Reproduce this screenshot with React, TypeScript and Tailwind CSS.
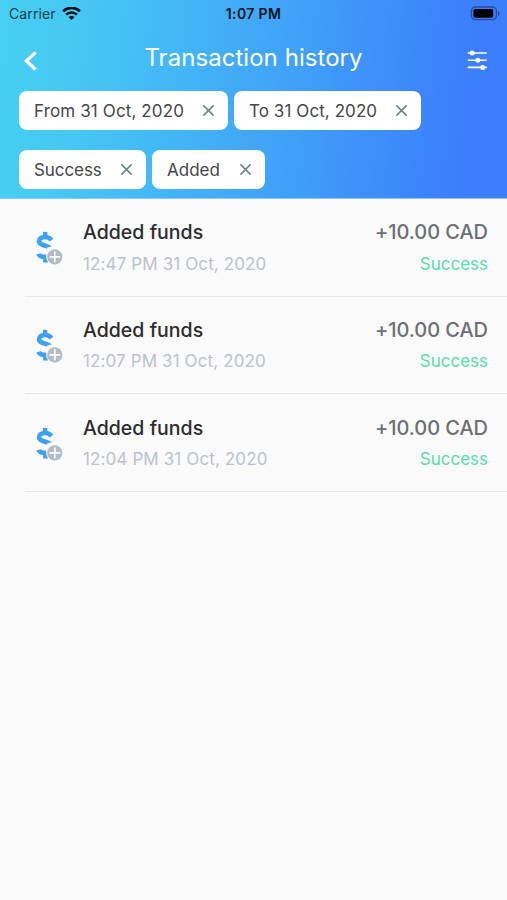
const chipRows = [
  [
    { label: 'From 31 Oct, 2020', width: 'w-[209px]', tracking: 'tracking-[0.13px]' },
    { label: 'To 31 Oct, 2020', width: 'w-[187px]', tracking: 'tracking-[0.08px]' },
  ],
  [
    { label: 'Success', width: 'w-[127px]', tracking: 'tracking-[-0.08px]' },
    { label: 'Added', width: 'w-[113px]', tracking: 'tracking-[0px]' },
  ],
];

const transactions = [
  { id: 1, time: '12:47 PM 31 Oct, 2020' },
  { id: 2, time: '12:07 PM 31 Oct, 2020' },
  { id: 3, time: '12:04 PM 31 Oct, 2020' },
];

function WifiIcon() {
  return (
    <svg className="ml-[6px] h-[14px] w-[19px]" viewBox="0 0 19 14" fill="none" stroke="#06131c">
      <path d="M1.1 4.3C5.8 -.3 13.2 -.3 17.9 4.3" strokeWidth="2.7" />
      <path d="M4.1 7.6C7.1 4.7 11.9 4.7 14.9 7.6" strokeWidth="2.5" />
      <path d="M9.5 12.9 6.5 10C8.2 8.5 10.8 8.5 12.5 10Z" fill="#06131c" stroke="none" />
    </svg>
  );
}

function BatteryIcon() {
  return (
    <svg className="h-[15px] w-[31px]" viewBox="0 0 31 15" fill="none">
      <rect x="1.4" y="1" width="25" height="12.6" rx="3.8" stroke="#255099" strokeWidth="1.3" />
      <rect x="3.4" y="2.9" width="19.8" height="8.8" rx="1.8" fill="#000" />
      <path d="M28 5c2 .6 2 4.4 0 5Z" fill="#255099" />
    </svg>
  );
}

function FilterIcon() {
  return (
    <svg className="h-[22px] w-[22px]" viewBox="0 0 22 22" stroke="#fff" strokeWidth="1.6" strokeLinecap="round" fill="#fff">
      <path d="M1.4 4h17.8M1.4 11.2h17.8M1.4 18.4h17.8" />
      <circle cx="5.2" cy="4" r="1.7" />
      <circle cx="10.8" cy="11.2" r="1.7" />
      <circle cx="15.8" cy="18.4" r="1.7" />
    </svg>
  );
}

function FundsIcon() {
  return (
    <svg className="h-[36px] w-[30px]" viewBox="0 0 30 36" fill="none">
      <path d="M9 6V1.9h4.3V6" fill="#3da0f3" />
      <path d="M17.5 10.2C15.6 7.6 13.4 7 10.9 7 7.4 7 5 8.6 5 11.2c0 3 3.2 3.7 6.3 4.5 3.7.9 6 2.2 6 5.3" stroke="#3da0f3" strokeWidth="4.7" />
      <path d="M13.2 17.5 19 16v4l-6 3Z" fill="#fafafa" />
      <path d="M2.2 24.6 6.8 23.2c.9 1 2.6 1.4 5.4 1.2l1.7 3.4v4.7H9.2v-3.2C5.8 28.8 3.4 27.4 2.2 24.6Z" fill="#3da0f3" />
      <circle cx="20.8" cy="26.9" r="8.6" fill="#fafafa" />
      <circle cx="20.8" cy="26.9" r="7.6" fill="#b3bbc5" />
      <path d="M20.8 22.2v9.4M16.1 26.9h9.4" stroke="#fff" strokeWidth="1.7" strokeLinecap="round" />
    </svg>
  );
}

function Chip({ label, width, tracking }: { label: string; width: string; tracking: string }) {
  return (
    <div className={`flex h-[39px] items-center justify-between rounded-[8px] bg-white pr-[14px] pl-[15px] ${width}`}>
      <span className={`text-[17px] leading-[24px] whitespace-nowrap text-[#444648] ${tracking}`}>{label}</span>
      <svg className="h-[11px] w-[11px]" viewBox="0 0 11 11" stroke="#688388" strokeWidth="1.6" strokeLinecap="round">
        <path d="m.9.9 9.2 9.2m0-9.2L.9 10.1" />
      </svg>
    </div>
  );
}

export default function App() {
  return (
    <div className="flex h-[900px] w-[507px] flex-col overflow-hidden bg-[#fafafa] font-['Inter',sans-serif]">
      <header className="h-[199px] shrink-0 border-b border-[#8fc8f8] bg-[linear-gradient(96deg,#46d0f2_0%,#46c7f3_16%,#43b5f6_36%,#40a0f8_58%,#3c85fb_83%,#3c7efb_91%,#3c7efb_100%)]">
        <div className="grid h-[27px] grid-cols-3 items-center text-[14px] leading-[20px] text-[#06131c]">
          <div className="flex items-center pl-[9px]">
            <span className="tracking-[0.1px] text-[#153c4b]">Carrier</span>
            <WifiIcon />
          </div>
          <span className="text-center font-semibold tracking-[0.35px]">1:07 PM</span>
          <div className="flex justify-end pr-[6px]">
            <BatteryIcon />
          </div>
        </div>
        <div className="grid h-[64px] grid-cols-[50px_1fr_50px]">
          <svg className="mt-[23px] ml-[23px] h-[22px] w-[15px]" viewBox="0 0 15 22" fill="none" stroke="#fff" strokeWidth="3.3">
            <path d="M12.7 2.4 3.4 11l9.3 8.6" />
          </svg>
          <h1 className="mt-[15px] text-center text-[24px] leading-[32px] tracking-[0.05px] text-white">Transaction history</h1>
          <div className="mt-[22px] ml-[10px]">
            <FilterIcon />
          </div>
        </div>
        <div className="flex flex-col gap-5 pl-[19px]">
          {chipRows.map((row) => (
            <div key={row[0].label} className="flex gap-[6px]">
              {row.map((chip) => (
                <Chip key={chip.label} {...chip} />
              ))}
            </div>
          ))}
        </div>
      </header>
      <main>
        {transactions.map(({ id, time }) => (
          <div key={id} className="ml-[25px] flex h-[97.7px] border-b border-[#e6e7e8] pt-[19.4px] pr-[19px]">
            <div className="w-[58px] pt-[12px] pl-[9px]">
              <FundsIcon />
            </div>
            <div className="flex flex-1 flex-col">
              <span className="text-[19.5px] leading-[28px] font-medium tracking-[0.03px] text-[#2b2c2d]">Added funds</span>
              <span className="mt-[5.4px] text-[17px] leading-[24px] tracking-[0.12px] text-[#bbc2cc]">{time}</span>
            </div>
            <div className="flex flex-col items-end">
              <span className="text-[20px] leading-[28px] font-medium tracking-[-0.05px] text-[#6c6f72]">+10.00 CAD</span>
              <span className="mt-[5.4px] text-[17px] leading-[24px] text-[#58dca9]">Success</span>
            </div>
          </div>
        ))}
      </main>
    </div>
  );
}
